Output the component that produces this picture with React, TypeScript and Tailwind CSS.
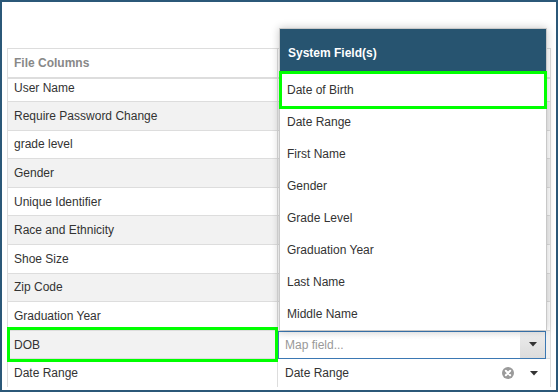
import React from "react";

const rows = [
  { name: "Require Password Change", gray: true },
  { name: "grade level", gray: false },
  { name: "Gender", gray: true },
  { name: "Unique Identifier", gray: false },
  { name: "Race and Ethnicity", gray: true },
  { name: "Shoe Size", gray: false },
  { name: "Zip Code", gray: true },
  { name: "Graduation Year", gray: false },
];

const options = [
  "Date Range",
  "First Name",
  "Gender",
  "Grade Level",
  "Graduation Year",
  "Last Name",
  "Middle Name",
];

function Caret() {
  return (
    <svg width="8" height="5" viewBox="0 0 8 5">
      <path d="M0 0 L8 0 L4 4.5 Z" fill="#333" />
    </svg>
  );
}

function ClearIcon() {
  return (
    <svg width="12" height="12" viewBox="0 0 12 12">
      <circle cx="6" cy="6" r="6" fill="#9a9a9a" />
      <path d="M3.8 3.8 L8.2 8.2 M8.2 3.8 L3.8 8.2" stroke="#fff" strokeWidth="2" strokeLinecap="round" />
    </svg>
  );
}

export default function App() {
  return (
    <div className="w-[558px] h-[392px] border-2 border-[#2b5878] bg-white relative overflow-hidden font-['Liberation_Sans',Arial,sans-serif] text-[12px] text-[#333]">
      <div className="pt-[46px] pl-[5px] pr-[5px]">
        <div className="border-l border-r border-[#ddd]">
          {/* header (right cell sits under the open menu) */}
          <div className="grid grid-cols-[270px_1fr] h-[31px] border-t border-b-2 border-[#ddd]">
            <div className="border-r border-[#ddd] pl-[6px] flex items-center font-bold text-[#888]">File Columns</div>
            <div />
          </div>

          {/* scrolled first row */}
          <div className="grid grid-cols-[270px_1fr] h-[22px]">
            <div className="border-r border-[#ddd] pl-[6px] flex items-center pb-[5px]">User Name</div>
            <div />
          </div>

          {rows.map((r) => (
            <div
              key={r.name}
              className={`grid grid-cols-[270px_1fr] h-[28.6px] border-t border-[#ddd] ${r.gray ? "bg-[#f2f2f2]" : "bg-white"}`}
            >
              <div className="border-r border-[#ddd] pl-[6px] flex items-center">{r.name}</div>
              <div />
            </div>
          ))}

          {/* DOB row */}
          <div className="grid grid-cols-[270px_1fr] h-[28.6px] border-t border-[#ddd] bg-[#f2f2f2]">
            <div className="relative border-r border-[#ddd] pl-[6px] flex items-center">
              DOB
              <div className="absolute -left-px right-[-1px] -top-[4px] -bottom-[3px] border-[3.5px] border-[#00ff00]" />
            </div>
            <div className="pr-[4px]">
              <div className="h-[28px] flex border border-[#3b78b3] bg-gradient-to-b from-[#f4f4f4] to-white to-[30%]">
                <div className="flex-1 pl-[6px] flex items-center text-[#999]">Map field...</div>
                <div className="w-[25px] flex items-center justify-center bg-gradient-to-b from-[#ececec] to-[#dcdcdc]">
                  <Caret />
                </div>
              </div>
            </div>
          </div>

          {/* Date Range row */}
          <div className="grid grid-cols-[270px_1fr] h-[29px] border-t border-[#ddd] bg-white">
            <div className="border-r border-[#ddd] pl-[6px] flex items-center">Date Range</div>
            <div className="pl-[7px] pr-[12px] flex items-center">
              <span className="flex-1">Date Range</span>
              <ClearIcon />
              <span className="ml-[16px]"><Caret /></span>
            </div>
          </div>
        </div>
      </div>

      {/* open select menu */}
      <div className="absolute left-[277px] top-[26px] w-[268px] bg-white border border-[#c8c8c8] border-b-0 shadow-[0_0_8px_rgba(0,0,0,0.22)]">
        <div className="h-[45px] bg-[#275470] text-white font-bold pl-[8px] pt-[3px] flex items-center">System Field(s)</div>
        <div className="h-8 mx-[2px] pl-[5px] flex items-center relative outline-[3.5px] outline-solid outline-[#00ff00] z-10 bg-white">Date of Birth</div>
        {options.map((o) => (
          <div key={o} className="h-8 pl-[7px] flex items-center">{o}</div>
        ))}
      </div>
    </div>
  );
}
